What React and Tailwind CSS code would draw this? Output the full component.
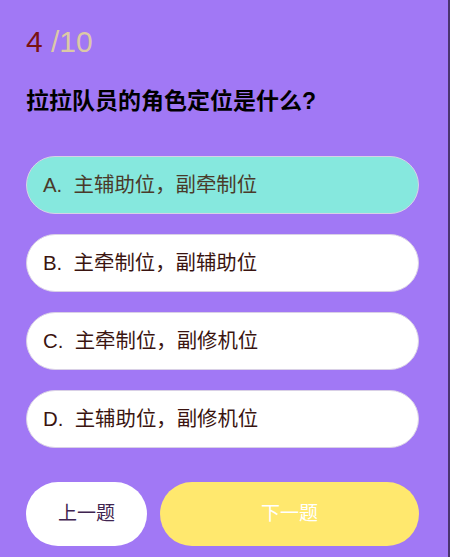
const options = [
  { key: 'A', text: '主辅助位，副牵制位', selected: true },
  { key: 'B', text: '主牵制位，副辅助位' },
  { key: 'C', text: '主牵制位，副修机位' },
  { key: 'D', text: '主辅助位，副修机位' },
];

export default function App() {
  return (
    <div
      className="h-[557px] w-[450px] bg-[#a178f5] border-r-2 border-[#4b3470] pl-[26px] pr-[29px] pt-[24px]"
      style={{ fontFamily: '"Liberation Sans", "Noto Sans CJK SC", sans-serif' }}
    >
      <div className="text-[30px] leading-[36px]">
        <span className="text-[#7a1212]">4</span>
        <span className="text-[#dcc9a6]"> /10</span>
      </div>
      <h2 className="mt-[26px] text-[23px] leading-[30px] font-bold text-black">
        拉拉队员的角色定位是什么?
      </h2>
      <div className="mt-[40px] flex flex-col gap-[20px]">
        {options.map((o) => (
          <button
            key={o.key}
            className={
              'h-[58px] w-full rounded-full border border-[#d9d0e6] pl-[16px] text-left text-[20.4px] ' +
              (o.selected ? 'bg-[#86e8de] text-[#4a3a2a]' : 'bg-white text-[#3a1410]')
            }
          >
            {o.key}.&nbsp;&nbsp;{o.text}
          </button>
        ))}
      </div>
      <div className="mt-[34px] flex gap-[13px]">
        <button className="h-[64px] w-[121px] rounded-full bg-white text-[19px] text-[#3f2450]">
          上一题
        </button>
        <button className="h-[64px] flex-1 rounded-full bg-[#ffe86e] text-[19px] text-white">
          下一题
        </button>
      </div>
    </div>
  );
}
